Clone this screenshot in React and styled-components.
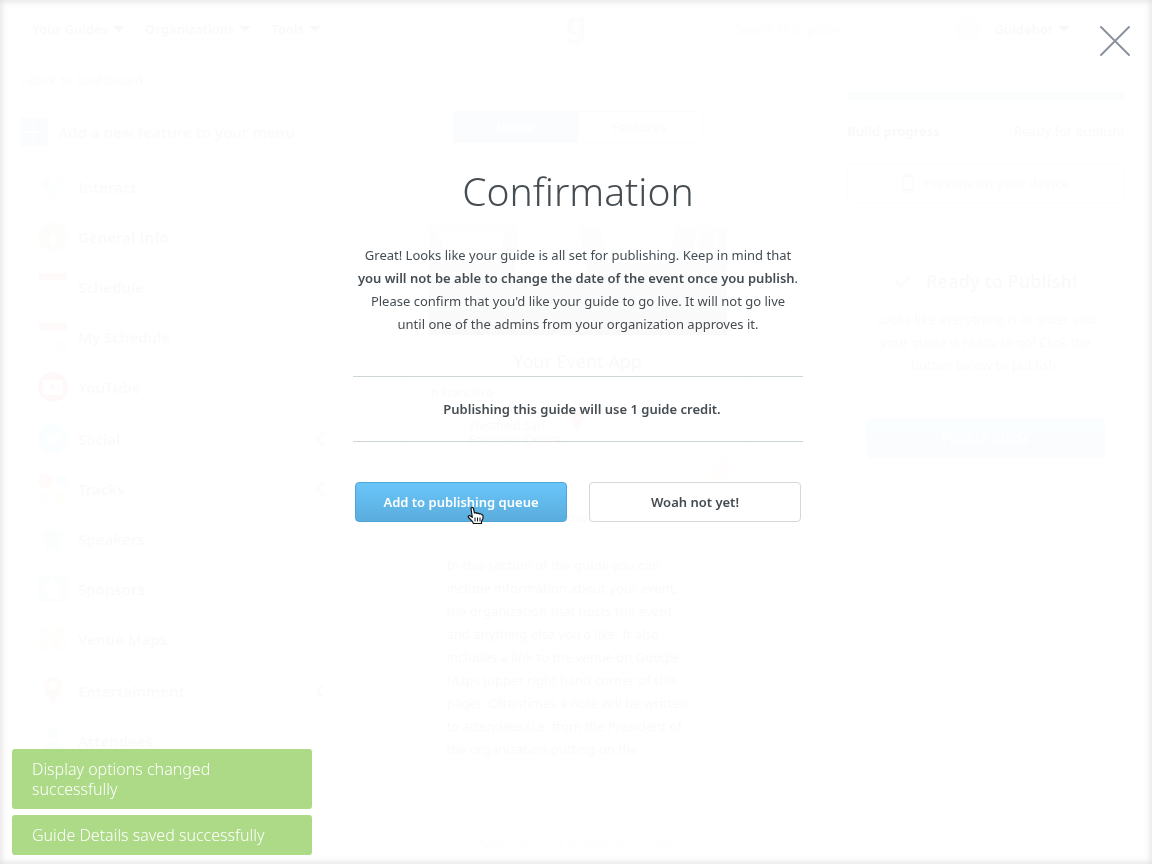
import React from 'react';
import styled, { createGlobalStyle } from 'styled-components';

const Global = createGlobalStyle`
  *, *::before, *::after { box-sizing: border-box; }
  html, body, #root { min-height: 100vh; }
  body {
    margin: 0;
    background: #fff;
    color: #454d53;
    font-family: "Noto Sans", "Open Sans", "Liberation Sans", sans-serif;
    font-size: 13px;
    line-height: 20px;
    overflow: hidden;
  }
  button, input { font: inherit; color: inherit; }
  h1, h2, h3, p, ul { margin: 0; padding: 0; }
`;

const Page = styled.div`
  height: 100vh;
  overflow: hidden;
  display: flex;
  flex-direction: column;
`;

const TopBar = styled.header`
  display: grid;
  grid-template-columns: 1fr auto 1fr;
  align-items: center;
  height: 59px;
  flex: none;
  padding: 0 32px;
  border-bottom: 1px solid #e4e8ea;
`;

const Nav = styled.nav`
  display: flex;
  align-items: center;
  gap: 20px;
  justify-content: ${p => (p.$end ? 'flex-end' : 'flex-start')};
`;

const NavButton = styled.button`
  display: flex;
  align-items: center;
  gap: 5px;
  padding: 0;
  border: 0;
  background: none;
  font-weight: 600;
  color: #777;
  &::after {
    content: '';
    border: 6px solid transparent;
    border-top-color: #666;
    border-bottom: 0;
  }
`;

const Search = styled.input`
  width: 200px;
  border: 0;
  background: none;
  padding: 0;
  &::placeholder { color: #aaa; opacity: 1; }
`;

const Avatar = styled.span`
  width: 28px;
  height: 28px;
  border-radius: 50%;
  background: #ddd;
`;

const Account = styled.div`
  display: flex;
  align-items: center;
  gap: 12px;
  padding-right: 50px;
`;

const Logo = styled.span`
  padding-bottom: 12px;
  font-size: 34px;
  line-height: 46px;
  font-weight: 700;
  color: #9cc;
`;

const Columns = styled.div`
  flex: 1;
  min-height: 0;
  display: grid;
  grid-template-columns: 340px minmax(0, 1fr) 337px;
`;

const Sidebar = styled.aside`
  border-right: 1px solid #eceeef;
`;

const BackLink = styled.a`
  display: flex;
  align-items: center;
  height: 43px;
  padding-left: 20px;
  color: #999;
  text-decoration: none;
  border-bottom: 1px solid #eceeef;
`;

const AddFeature = styled.button`
  display: flex;
  align-items: center;
  gap: 10px;
  width: 100%;
  height: 60px;
  padding: 0 20px;
  border: 0;
  background: none;
  color: #8a94ac;
  font-size: 15px;
  font-weight: 600;
`;

const Menu = styled.ul`
  list-style: none;
`;

const MenuItem = styled.li`
  display: flex;
  align-items: center;
  gap: 10px;
  height: 50px;
  padding: 0 14px 0 38px;
  margin-top: ${p => (p.$spaced ? '2px' : '0')};
  font-size: 15px;
  font-weight: 600;
  color: #888;
  svg { flex: none; }
  span { flex: 1; }
`;

const Preview = styled.main`
  display: flex;
  flex-direction: column;
  align-items: center;
  padding-top: 52px;
`;

const Tabs = styled.div`
  display: grid;
  grid-template-columns: 1fr 1fr;
  width: 250px;
  height: 32px;
  flex: none;
  border: 1px solid #b4bac4;
  border-radius: 3px;
  overflow: hidden;
`;

const Tab = styled.button`
  border: 0;
  background: ${p => (p.$on ? '#8fb0d8' : '#fff')};
  color: ${p => (p.$on ? '#fff' : '#aaa')};
  font-weight: 600;
`;

const Phone = styled.section`
  width: 342px;
  margin-top: 24px;
  padding: 56px 20px 0;
  border: solid #e4e6e8;
  border-width: 0 1px;
  flex: 1;
`;

const Screen = styled.div`
  border: solid #eee;
  border-width: 0 1px;
`;

const Drawing = styled.svg`
  display: block;
  width: 100%;
  height: ${p => p.$h}px;
  overflow: visible;
`;

const AppName = styled.h2`
  height: 52px;
  line-height: 52px;
  font-size: 18px;
  font-weight: 400;
  text-align: center;
  color: #777;
`;

const About = styled.h3`
  height: 75px;
  padding-top: 28px;
  font-size: 13px;
  font-weight: 600;
  text-align: center;
  color: #999;
`;

const Note = styled.p`
  padding: 0 18px;
  line-height: 23px;
  white-space: nowrap;
  color: #777;
`;

const Footer = styled.p`
  height: 30px;
  flex: none;
  color: #ccc;
`;

const Build = styled.aside`
  display: flex;
  flex-direction: column;
  padding: 33px 28px 0 31px;
  border-left: 1px solid #eceeef;
`;

const Progress = styled.div`
  height: 8px;
  border-radius: 2px;
  background: #a8c0d0;
`;

const BuildState = styled.div`
  display: flex;
  justify-content: space-between;
  margin-top: 21px;
  color: #777;
`;

const DeviceButton = styled.button`
  display: flex;
  align-items: center;
  justify-content: center;
  gap: 10px;
  height: 40px;
  margin-top: 22px;
  border: 1px solid #b8bcc0;
  border-radius: 4px;
  background: #fff;
  color: #99a6b4;
  font-weight: 600;
`;

const Ready = styled.section`
  margin-top: 40px;
  padding: 25px 18px 22px;
  text-align: center;
  border: 1px solid #f2f3f4;
  color: #888;
  p { line-height: 23px; padding-bottom: 16px; border-bottom: 1px solid #eceeef; }
`;

const ReadyTitle = styled.h2`
  display: flex;
  align-items: center;
  justify-content: center;
  gap: 14px;
  margin-bottom: 15px;
  font-size: 18px;
  line-height: 24px;
  font-weight: 600;
`;

const Publish = styled.button`
  width: 100%;
  height: 40px;
  margin-top: 24px;
  border: 1px solid #a3b9d0;
  border-radius: 4px;
  background: linear-gradient(#98e0e4 40%, #a3b6ce 41%);
  color: #fff;
  font-weight: 600;
`;

const Overlay = styled.div`
  position: fixed;
  inset: 0;
  display: flex;
  justify-content: center;
  background: rgba(255, 255, 255, 0.955);
  box-shadow: inset 0 0 7px 1px rgba(0, 0, 0, 0.13);
`;

const Dialog = styled.section`
  width: 450px;
  margin: 162px 0 0 4px;
  text-align: center;
`;

const Title = styled.h1`
  font-size: 39px;
  line-height: 58px;
  font-weight: 300;
`;

const Message = styled.p`
  margin-top: 24px;
  line-height: 23px;
  white-space: nowrap;
  b { font-weight: 600; }
`;

const Credit = styled.p`
  margin-top: 40px;
  padding-left: 8px;
  border: solid #cdd5d9;
  border-width: 1px 0;
  line-height: 64px;
  font-weight: 600;
`;

const Actions = styled.div`
  display: grid;
  grid-template-columns: 1fr 1fr;
  gap: 22px;
  margin-top: 40px;
  padding: 0 2px;
`;

const Action = styled.button`
  height: 40px;
  border: 1px solid ${p => (p.$primary ? '#4fa6d6' : '#d3d8da')};
  border-radius: 4px;
  background: ${p => (p.$primary ? 'linear-gradient(#6ac5f9, #5aaddd)' : '#fff')};
  color: ${p => (p.$primary ? '#fff' : '#444b50')};
  font-weight: 600;
`;

const Close = styled.button`
  position: absolute;
  top: 25px;
  right: 21px;
  width: 32px;
  height: 32px;
  padding: 0;
  border: 0;
  background: none;
  svg { display: block; }
`;

const Pointer = styled.svg`
  position: fixed;
  left: 467px;
  top: 506px;
`;

const Toasts = styled.div`
  position: fixed;
  left: 12px;
  bottom: 9px;
  width: 300px;
  display: flex;
  flex-direction: column;
  gap: 6px;
`;

const Toast = styled.div`
  padding: 10px 20px;
  border-radius: 3px;
  background: #acda87;
  color: #fff;
  font-size: 16px;
  font-weight: 300;
  line-height: 20px;
`;

const icons = {
  interact: <><path d="M4 8h8v8H4z" fill="#9cc4dd" /><circle cx="23" cy="8" r="4" fill="#dde9b0" /><path d="M11 14h8v12h-8z" fill="#c5e6ee" /></>,
  info: <><circle cx="15" cy="15" r="15" fill="#c4e8b4" /><path d="M15 13v10M15 7v2" stroke="#fff" strokeWidth="3" /></>,
  schedule: <><path d="M1 1h28v8H1z" fill="#f09090" /><path d="M1 9h28v19H1zM8 9v19M15 9v19M22 9v19M1 15h28M1 22h28" fill="none" stroke="#ddd" /></>,
  mine: <><path d="M1 1h28v8H1z" fill="#f09090" /><path d="M1 9h28v19H1zM10 9v19M20 9v19" fill="none" stroke="#ddd" /><circle cx="24" cy="23" r="4" fill="none" stroke="#e6c0a0" strokeWidth="2" /></>,
  youtube: <><circle cx="15" cy="15" r="15" fill="#f0586c" /><rect x="5" y="8" width="20" height="15" rx="3" fill="#fff" /><path d="M13 12v6l5-3z" fill="#f0586c" /></>,
  social: <><circle cx="15" cy="15" r="15" fill="#90e2ee" /><path d="M8 20c7 4 14-1 14-8l2-3-4-1c-3-1-5 1-5 4-3 0-5-1-7-4-1 3 0 6 3 7l-2 1 3 2z" fill="#fff" /></>,
  tracks: <><circle cx="7" cy="7" r="7" fill="#f09898" /><circle cx="24" cy="7" r="6" fill="#90e6ee" /><circle cx="7" cy="23" r="6" fill="#efe8c0" /><circle cx="24" cy="23" r="6" fill="#f0dca8" /></>,
  speakers: <path d="M2 10l10-3 3-5 3 5 10 3-7 7 2 11-8-5-8 5 2-11z" fill="#b8e6e8" />,
  sponsors: <><path d="M0 2h30v26H0z" fill="#aee4d6" /><path d="M15 5l3 5 7 1-4 5v8H9v-8l-4-5 7-1z" fill="#fff" /></>,
  maps: <><path d="M2 3h26v25H2z" fill="#e8f0d0" /><path d="M2 12h26M11 3v25" stroke="#fff" strokeWidth="2" /><circle cx="17" cy="20" r="4" fill="#edb8a0" /></>,
  pin: <path fillRule="evenodd" d="M15 1c-6 0-9 4-9 9 0 7 9 18 9 18s9-11 9-18c0-5-3-9-9-9zm0 5a4 4 0 110 8 4 4 0 010-8z" fill="#f09c9c" />,
  people: <><circle cx="15" cy="8" r="6" fill="#b0e2de" /><path d="M3 27c0-15 24-15 24 0z" fill="#b0e2de" /></>,
};

const items = [
  ['interact', 'Interact'],
  ['info', 'General Info'],
  ['schedule', 'Schedule'],
  ['mine', 'My Schedule'],
  ['youtube', 'YouTube'],
  ['social', 'Social', true, true],
  ['tracks', 'Tracks', true],
  ['speakers', 'Speakers'],
  ['sponsors', 'Sponsors'],
  ['maps', 'Venue Maps'],
  ['pin', 'Entertainment', true, true],
  ['people', 'Attendees'],
];

function MenuIcon({ name }) {
  return <svg width="30" height="30" viewBox="0 0 30 30" aria-hidden="true">{icons[name]}</svg>;
}

export default function App() {
  return (
    <>
      <Global />
      <Page>
        <TopBar>
          <Nav>
            <NavButton>Your Guides</NavButton>
            <NavButton>Organizations</NavButton>
            <NavButton>Tools</NavButton>
          </Nav>
          <Logo>g</Logo>
          <Nav $end>
            <Search aria-label="Search this guide" placeholder="Search this guide" />
            <Account>
              <Avatar />
              <NavButton>Guidebot</NavButton>
            </Account>
          </Nav>
        </TopBar>
        <Columns>
          <Sidebar>
            <BackLink href="#">‹ Back to Dashboard</BackLink>
            <AddFeature>
              <svg width="28" height="28" viewBox="0 0 28 28" aria-hidden="true">
                <rect width="28" height="28" rx="3" fill="#86acd8" />
                <path d="M14 6v16M6 14h16" stroke="#fff" strokeWidth="2" />
              </svg>
              Add a new feature to your menu
            </AddFeature>
            <Menu>
              {items.map(([icon, label, group, spaced]) => (
                <MenuItem key={label} $spaced={spaced}>
                  <MenuIcon name={icon} />
                  <span>{label}</span>
                  {group && (
                    <svg width="10" height="14" viewBox="0 0 10 14" aria-hidden="true">
                      <path d="M8 1L2 7l6 6" fill="none" stroke="#999" strokeWidth="2" />
                    </svg>
                  )}
                </MenuItem>
              ))}
            </Menu>
          </Sidebar>
          <Preview>
            <Tabs>
              <Tab $on>Home</Tab>
              <Tab>Features</Tab>
            </Tabs>
            <Phone>
              <Screen>
                <Drawing $h={112} viewBox="0 0 300 112" preserveAspectRatio="none" aria-hidden="true">
                  <defs>
                    <linearGradient id="hero" x1="0" y1="0" x2="0" y2="1">
                      <stop offset="0" stopColor="#d8dadc" />
                      <stop offset="1" stopColor="#808284" />
                    </linearGradient>
                  </defs>
                  <rect width="300" height="112" fill="url(#hero)" />
                  <path d="M8 8h70l-10 30H20zM90 0h60l10 55H86zM170 0h80l-10 40h-60z" fill="#eee" />
                  <circle cx="279" cy="19" r="11" fill="none" stroke="#fff" strokeWidth="2" />
                </Drawing>
                <AppName>Your Event App</AppName>
                <Drawing $h={92} viewBox="0 0 300 92" preserveAspectRatio="none" aria-hidden="true">
                  <rect width="300" height="92" fill="#f5f4f2" />
                  <path d="M0 90L120 0M60 92L230 0M170 92L300 20M0 20l110 72M160 0l120 92" stroke="#fff" strokeWidth="4" />
                  <path d="M280 92l20-30v30z" fill="#f3dcc0" />
                  <path d="M149 46l-8-18a8 8 0 1116 0z" fill="#ef9c94" />
                  <g fill="#888" fontSize="12">
                    <text x="2" y="10">n Francisco</text>
                    <text x="40" y="43">Westfield San</text>
                    <text x="40" y="57">Francisco Centre</text>
                  </g>
                </Drawing>
                <About>About Your Event</About>
                <Note>
                  In this section of the guide you can<br />
                  include information about your event,<br />
                  the organization that hosts the event,<br />
                  and anything else you'd like. It also<br />
                  includes a link to the venue on Google<br />
                  Maps (upper right hand corner of this<br />
                  page). Oftentimes a note will be written<br />
                  to attendees (i.e. from the President of<br />
                  the organization putting on the
                </Note>
              </Screen>
            </Phone>
            <Footer>Select an area to edit your guide</Footer>
          </Preview>
          <Build>
            <Progress />
            <BuildState>
              <strong>Build progress</strong>
              <span>Ready for publish!</span>
            </BuildState>
            <DeviceButton>
              <svg width="12" height="21" viewBox="0 0 12 21" aria-hidden="true">
                <rect x="1" y="1" width="10" height="19" rx="1" fill="none" stroke="#8095ac" />
                <path d="M1 3h10M1 17h10" stroke="#8095ac" strokeWidth="2" />
              </svg>
              Preview on your device
            </DeviceButton>
            <Ready>
              <ReadyTitle>
                <svg width="18" height="14" viewBox="0 0 18 14" aria-hidden="true">
                  <path d="M2 7l5 5 9-10" fill="none" stroke="#9db2dc" strokeWidth="3" />
                </svg>
                Ready to Publish!
              </ReadyTitle>
              <p>Looks like everything is in order and your guide is ready to go! Click the button below to publish.</p>
              <Publish>Publish Guide</Publish>
            </Ready>
          </Build>
        </Columns>
      </Page>

      <Overlay>
        <Dialog role="dialog" aria-modal="true" aria-labelledby="confirm-title">
          <Title id="confirm-title">Confirmation</Title>
          <Message>
            Great! Looks like your guide is all set for publishing. Keep in mind that<br />
            <b>you will not be able to change the date of the event once you publish</b>.<br />
            Please confirm that you'd like your guide to go live. It will not go live<br />
            until one of the admins from your organization approves it.
          </Message>
          <Credit>Publishing this guide will use 1 guide credit.</Credit>
          <Actions>
            <Action $primary>Add to publishing queue</Action>
            <Action>Woah not yet!</Action>
          </Actions>
        </Dialog>
        <Close aria-label="Close">
          <svg width="32" height="32" viewBox="0 0 32 32">
            <path d="M2 2l28 28M30 2L2 30" stroke="#8b939f" strokeWidth="2" strokeLinecap="round" />
          </svg>
        </Close>
      </Overlay>

      <Toasts role="status">
        <Toast>Display options changed successfully</Toast>
        <Toast>Guide Details saved successfully</Toast>
      </Toasts>

      <Pointer width="17" height="19" viewBox="0 0 17 19" aria-hidden="true">
        <path
          d="M4 2.500c0-1.500 2-1.500 2.500 0L7.500 7c.8-.8 2-.5 2.300.5.800-.8 2-.5 2.400.5.800-.6 1.800-.3 2.200.6 1-.2 1.600.6 1.600 1.600v2.300l-1.500 3V17.500H6.500L5 15 1.500 11.500c-.8-1.500.8-2.500 2-1.500l1.800 1.300z"
          fill="#fff" stroke="#111" strokeWidth="1.200" strokeLinejoin="round"
        />
        <path d="M8 11.500v4M10.500 11.500v4M13 11.500v4" stroke="#111" />
      </Pointer>
    </>
  );
}
